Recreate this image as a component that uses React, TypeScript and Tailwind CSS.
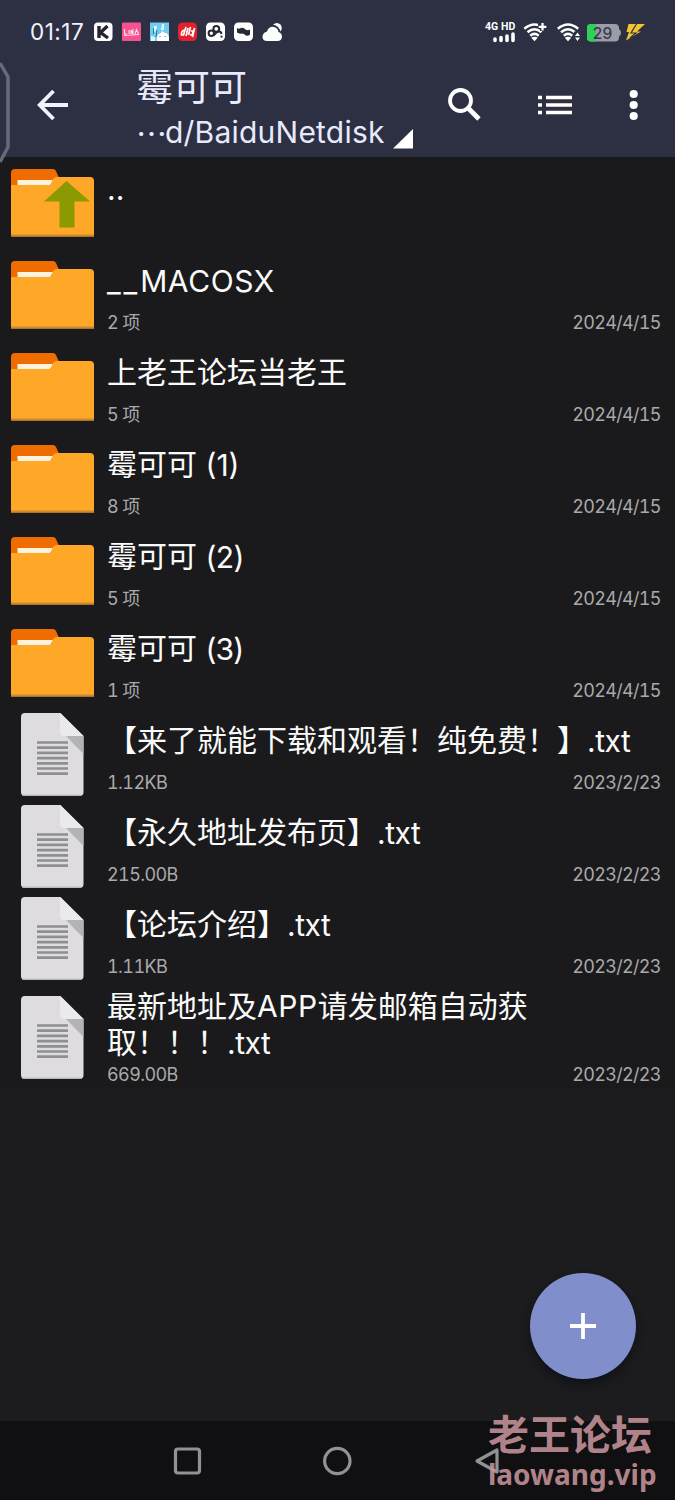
import React from "react";

type Entry = { kind: "up" | "folder" | "file"; name: React.ReactNode; info?: string; date?: string };

const entries: Entry[] = [
  { kind: "up", name: <span className="align-[-1px] leading-none">..</span> },
  {
    kind: "folder",
    name: <span className="align-[-1px] leading-none"><span className="tracking-[2.9px]">__</span><span className="tracking-[0.6px]">MACOSX</span></span>,
    info: "2 项",
    date: "2024/4/15",
  },
  { kind: "folder", name: "上老王论坛当老王", info: "5 项", date: "2024/4/15" },
  { kind: "folder", name: <>霉可可 <span className="align-[-1px] leading-none">(1)</span></>, info: "8 项", date: "2024/4/15" },
  { kind: "folder", name: <>霉可可 <span className="align-[-1px] leading-none tracking-[-0.6px]">(2)</span></>, info: "5 项", date: "2024/4/15" },
  { kind: "folder", name: <>霉可可 <span className="align-[-1px] leading-none tracking-[-0.8px]">(3)</span></>, info: "1 项", date: "2024/4/15" },
  { kind: "file", name: <>【来了就能下载和观看！纯免费！】<Ext /></>, info: "1.12KB", date: "2023/2/23" },
  { kind: "file", name: <>【永久地址发布页】<Ext /></>, info: "215.00B", date: "2023/2/23" },
  { kind: "file", name: <>【论坛介绍】<Ext /></>, info: "1.11KB", date: "2023/2/23" },
];

function Ext() {
  return <span className="align-[-1px] leading-none tracking-[-0.5px]">.txt</span>;
}

function FolderIcon({ up = false }: { up?: boolean }) {
  return (
    <svg width="84" height="68" viewBox="0 0 84 68">
      <path d="M0 16V4Q0 0 4 0H42Q44 0 45 2L49 11V20H0Z" fill="#ef6c00" />
      <path d="M6.500 11H42L39 16.500H6.500Z" fill="#fff3e0" />
      <path d="M0 16H38Q40 16 41 13L42 10Q43 8 46 8H79Q83 8 83 12V67.500H0Z" fill="#ffa726" />
      <path d="M0 65.500H83V67.500H0Z" fill="#c98a32" />
      {up && <path d="M55.500 12L79 32.500H63.500V58.500H48.500V32.500H33Z" fill="#8a9a00" />}
    </svg>
  );
}

function FileIcon() {
  return (
    <svg width="63" height="83" viewBox="0 0 63 83">
      <path d="M4 0H39.500L62.500 23V79Q62.500 83 58.500 83H4Q0 83 0 79V4Q0 0 4 0Z" fill="#dedce0" />
      <path d="M45 23H62.500V41Z" fill="#b3b2b5" />
      <path d="M39 0L62.500 23H43Q39 23 39 19Z" fill="#ebe9ed" />
      <path d="M1 82.200H61" stroke="#aaa9ac" strokeWidth="1" />
      <path d="M16 29.500H47M16 34.700H47M16 39.900H47M16 45.100H47M16 50.300H47M16 55.500H47M16 60.700H47" stroke="#8f8e91" strokeWidth="2.700" />
    </svg>
  );
}

function Row({ e }: { e: Entry }) {
  return (
    <div className="flex h-[92px] pr-[15px]">
      <div className={e.kind === "file" ? "flex w-[107px] items-start pt-1 pl-[21px]" : "flex w-[107px] items-center pl-[11px]"}>
        {e.kind === "file" ? <FileIcon /> : <FolderIcon up={e.kind === "up"} />}
      </div>
      <div className="min-w-0 flex-1 pt-[13px]">
        <div className="h-9 text-[30px] leading-9 whitespace-nowrap text-[#fafafa]">{e.name}</div>
        <Meta info={e.info} date={e.date} />
      </div>
    </div>
  );
}

function Meta({ info, date, tight = false }: { info?: string; date?: string; tight?: boolean }) {
  return (
    <div className={`flex justify-between text-lg leading-[22px] text-[#a9a9ab] tabular-nums ${tight ? "mt-1" : "mt-3.5"}`}>
      <span className="tracking-[-0.6px]">{info}</span>
      <span className="-mr-[0.7px] tracking-[-0.7px]">{date}</span>
    </div>
  );
}

function AppBadges() {
  return (
    <svg width="192" height="22" viewBox="93 21 192 22" className="ml-2">
      <rect x="94" y="22.500" width="18.500" height="18.500" rx="4" fill="#fff" />
      <path d="M99 26V38M107.500 26L100.500 32.500L108 38" stroke="#22252e" strokeWidth="3.400" fill="none" />
      <rect x="122" y="22.500" width="19" height="18.500" rx="1" fill="#f65292" />
      <path d="M124.500 29V34H127M129 30V34M131 34V30L133 34V29M135 34L136.500 29.500L138.500 34M124 35.500L139 34.500" stroke="#ffe0ed" strokeWidth="1.100" fill="none" />
      <rect x="150" y="22.500" width="19" height="18.500" fill="#6dcdf2" />
      <path d="M157 41Q156 34 161 33L162 31L164 32.500Q169 33 169 38V41Z" fill="#fff" />
      <path d="M153 28Q155 24 157 27L155 33ZM162 24L164 24V30H161ZM151 36L155 37V41H151Z" fill="#e1f8ff" />
      <path d="M153.500 28V34M157 30L156 37M160 36V37M165 36V37" stroke="#31769a" strokeWidth="1" fill="none" />
      <rect x="178" y="22.500" width="19" height="18.500" rx="4.500" fill="#e3212c" />
      <path d="M184.500 30Q181 31 181.500 35H183.500L186 27M188 28L186 36M190.500 27L188.500 35M191 31H193.500L192 35H190M194.500 28L192.500 37" stroke="#fff" strokeWidth="1.700" fill="none" />
      <rect x="206" y="22.500" width="19" height="18.500" rx="4.500" fill="#fff" />
      <g fill="none" stroke="#252936" strokeWidth="2">
        <circle cx="211.300" cy="33.300" r="2.700" />
        <circle cx="216.300" cy="28.800" r="2.900" />
        <path d="M213.500 35.500L217 32Q221 30.500 221.500 34" />
      </g>
      <circle cx="221.500" cy="36.700" r="1.100" fill="#252936" />
      <rect x="234" y="22.500" width="19" height="18.500" rx="4.500" fill="#fff" />
      <path d="M237 28Q238.500 29.500 241 28Q243.500 27 245.500 29.500Q247.500 31 250 29.500V34.500Q248 36.500 246 35.500L243 33.500Q240.500 34.500 237 32.500Z" fill="#252936" />
      <path d="M267 41Q262.500 41 262.500 36.500Q263 32.500 267 31.500Q269 26 274 27Q278 28 278.500 32Q282 33 282 37Q281.500 41 277.500 41Z" fill="#fff" />
      <path d="M273 24.500Q277 21.500 280.500 24.500Q283 28 280.500 31.500Q279 26 273 24.500Z" fill="#fff" />
    </svg>
  );
}

function Wifi({ x }: { x: number }) {
  return (
    <g transform={`translate(${x} 0)`} fill="none" stroke="#fff" strokeWidth="2.500">
      <path d="M0.800 28.800Q11 20.200 21.200 28.800" />
      <path d="M4 32.300Q11 26.200 18 32.300" />
      <path d="M6.800 35.700Q11 32 15.200 35.700" />
      <path d="M7.800 37.800Q11 35.500 14.200 37.800L11 41.300Z" fill="#fff" stroke="none" />
    </g>
  );
}

function StatusIcons() {
  return (
    <div className="flex items-center">
      <div className="flex w-[35px] flex-col">
        <span className="font-[Roboto] text-[10.5px] leading-[11px] font-bold tracking-[0.1px] whitespace-nowrap text-white">4G HD</span>
        <svg width="34" height="11" viewBox="0 0 34 11">
          <path d="M10 8.500V7M16 8.500V5.500M22 8.500V4M28 8.500V2" stroke="#fff" strokeWidth="3.600" strokeLinecap="round" />
        </svg>
      </div>
      <svg width="126" height="22" viewBox="520 21 126 22">
        <Wifi x={523.5} />
        <path d="M542.500 22V31M538 26.500H547" stroke="#2c3042" strokeWidth="5" />
        <path d="M542.500 23V30.500M538.700 26.800H546.300" stroke="#fff" strokeWidth="2.300" />
        <Wifi x={557} />
        <path d="M574 31.500H581V42H574Z" fill="#2c3042" />
        <path d="M575 36L577.500 32.500L580 36ZM575 37.500H580L577.500 41Z" fill="#fff" />
        <rect x="587" y="24" width="32" height="17.500" rx="4" fill="#9a9ca8" />
        <path d="M619 29Q621 30 621 32.700Q621 35.500 619 36.500Z" fill="#9a9ca8" />
        <path d="M591 24H596V41.500H591Q587 41.500 587 37.500V28Q587 24 591 24Z" fill="#30d158" />
        <text x="602.500" y="38.600" textAnchor="middle" fontFamily="Inter" fontSize="15.500" fontWeight="500" fill="#34394a">29</text>
        <path d="M628.500 24H645L637 31.500H641L626 40.500L629 32H626.500Z" fill="#f4c430" />
        <path d="M636.500 24L631 33H636L630 38" fill="none" stroke="#2c3042" strokeWidth="1.200" />
      </svg>
    </div>
  );
}

export default function App() {
  return (
    <div className="relative flex h-[1500px] w-[675px] flex-col overflow-hidden bg-[#1c1c1e] font-['Inter','Noto_Sans_CJK_SC',sans-serif]">
      <header className="h-[157px] shrink-0 bg-[#2c3042]">
        <div className="flex h-16 items-center justify-between pr-[29px] pl-[30px]">
          <div className="flex items-center">
            <span className="w-[55px] text-[22.5px] leading-7 tracking-[0.5px] whitespace-nowrap text-[#f3f3fb]">01:17</span>
            <AppBadges />
          </div>
          <StatusIcons />
        </div>
        <div className="flex h-[93px]">
          <div className="flex w-[136px] shrink-0 pt-[25px] pl-[37px]">
            <svg width="32" height="32" viewBox="0 0 32 32" fill="none" stroke="#f1f1ff" strokeWidth="3.800">
              <path d="M31 16H3M16.500 2L2.700 16L16.500 30" />
            </svg>
          </div>
          <div className="w-[310px] pt-1 text-[#e9e9fc]">
            <div className="text-[37px] leading-[40px]">霉可可</div>
            <div className="mt-1.5 flex text-[30px] leading-9">
              <span className="w-[29px] shrink-0 font-['Noto_Sans_CJK_SC'] text-[31px]">…</span>
              <span className="tracking-[0.22px] whitespace-nowrap">d/BaiduNetdisk</span>
              <svg className="mt-3.5 ml-2 shrink-0" width="21" height="21" viewBox="0 0 21 21"><path d="M20 1V20.500H0Z" fill="#fff" /></svg>
            </div>
          </div>
          <div className="flex flex-1 items-start pt-[22px]">
            <svg width="229" height="38" viewBox="446 86 229 38" fill="none" stroke="#fff">
              <circle cx="460.500" cy="100.500" r="10.500" strokeWidth="3.800" />
              <path d="M467.500 107.500L479 119" strokeWidth="4.800" />
              <path d="M538 97.500H542M546 97.500H572M538 105H542M546 105H572M538 112.500H542M546 112.500H572" strokeWidth="3.700" />
              <g fill="#fff" stroke="none">
                <circle cx="633.700" cy="94" r="4.100" />
                <circle cx="633.700" cy="105" r="4.100" />
                <circle cx="633.700" cy="116" r="4.100" />
              </g>
            </svg>
          </div>
        </div>
      </header>
      <main className="flex-1">
        <div className="bg-[#1a1a1c]">
          {entries.map((e, i) => <Row key={i} e={e} />)}
          <div className="flex h-[104px] pr-[15px]">
            <div className="flex w-[107px] items-start pt-[11px] pl-[21px]"><FileIcon /></div>
            <div className="flex-1 pt-[3px]">
              <div className="h-[72px] text-[30px] leading-9 whitespace-nowrap text-[#fafafa]">最新地址及<span className="tracking-[0.6px]">APP</span>请发邮箱自动获<br />取！！！<Ext /></div>
              <Meta info="669.00B" date="2023/2/23" tight />
            </div>
          </div>
        </div>
      </main>
      <nav className="flex h-[79px] shrink-0 items-center bg-[#101012] pl-[172px]">
        <svg width="350" height="32" viewBox="172 1445 350 32" fill="none" stroke="#929294" strokeWidth="3.200">
          <rect x="175.500" y="1449" width="24" height="24" rx="2.500" />
          <circle cx="337.300" cy="1461" r="12.700" />
          <path d="M497 1450V1472L477 1461Z" strokeLinejoin="round" />
        </svg>
      </nav>
      <svg className="absolute top-[60px] left-0" width="12" height="104" viewBox="0 60 12 104" fill="none">
        <path d="M0 63L8 77V147L0 162" stroke="#656a79" strokeWidth="3.500" />
      </svg>
      <button aria-label="+" className="absolute top-[1273px] left-[530px] flex size-[106px] items-center justify-center rounded-full bg-[#808fcb] shadow-[0_5px_10px_rgba(8,10,20,0.6)]">
        <svg width="28" height="28" viewBox="0 0 28 28"><path d="M14 1V27M1 14H27" stroke="#fff" strokeWidth="3.800" /></svg>
      </button>
      <div className="absolute top-[1412px] left-[488px] font-bold whitespace-nowrap text-[#c6949a]/90">
        <div className="text-[41px] leading-[46px]">老王论坛</div>
        <div className="font-['Noto_Sans'] text-[28px] leading-8">laowang.vip</div>
      </div>
    </div>
  );
}
